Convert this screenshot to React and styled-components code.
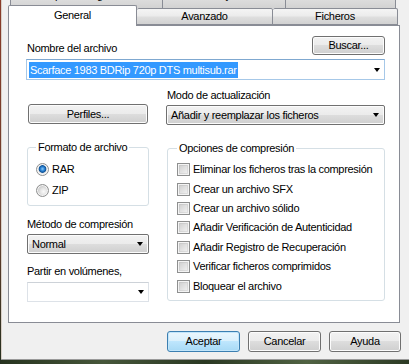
import React from 'react'
import styled, { createGlobalStyle } from 'styled-components'

const GlobalStyle = createGlobalStyle`
  html, body {
    margin: 0;
    padding: 0;
    background: #f0f0f0;
  }
  body {
    font-family: 'Liberation Sans', Arial, sans-serif;
    font-size: 11px;
    letter-spacing: -0.3px;
    color: #000;
  }
`

const topTabs = [
  { label: 'Copia de seguridad', width: 153 },
  { label: 'Fecha y hora', width: 124 },
  { label: 'Comentario', width: 111 },
]

const bottomTabs = [
  { label: 'General', width: 129, active: true },
  { label: 'Avanzado', width: 136 },
  { label: 'Ficheros', width: 125 },
]

const options = [
  'Eliminar los ficheros tras la compresión',
  'Crear un archivo SFX',
  'Crear un archivo sólido',
  'Añadir Verificación de Autenticidad',
  'Añadir Registro de Recuperación',
  'Verificar ficheros comprimidos',
  'Bloquear el archivo',
]

const App = () => {
  return (
    <Window>
      <GlobalStyle />
      <TabRowBack>
        {topTabs.map((t) => (
          <Tab key={t.label} style={{ width: t.width }}>
            {t.label}
          </Tab>
        ))}
      </TabRowBack>
      <TabRowFront>
        {bottomTabs.map((t) => (
          <Tab key={t.label} $active={t.active} style={{ width: t.width }}>
            {t.label}
          </Tab>
        ))}
      </TabRowFront>

      <Panel>
        <TopRow>
          <Label>Nombre del archivo</Label>
          <Button $w={73} $h={19}>Buscar...</Button>
        </TopRow>
        <EditCombo $focused $wide>
          <Selected>Scarface 1983 BDRip 720p DTS multisub.rar</Selected>
          <Arrow />
        </EditCombo>

        <Columns>
          <LeftColumn>
            <Button $w={120} $h={20} $ml={1} $mt={15}>Perfiles...</Button>

            <GroupBox $mt={17}>
              <Legend>Formato de archivo</Legend>
              <OptionRow $h={21}>
                <Radio $checked />
                <span>RAR</span>
              </OptionRow>
              <OptionRow $h={21}>
                <Radio />
                <span>ZIP</span>
              </OptionRow>
            </GroupBox>

            <Label $mt={12}>Método de compresión</Label>
            <ListCombo $mt={3}>
              <span>Normal</span>
              <Arrow />
            </ListCombo>

            <Label $mt={11}>Partir en volúmenes,</Label>
            <EditCombo $mt={4}>
              <span />
              <Arrow />
            </EditCombo>
          </LeftColumn>

          <RightColumn>
            <Label>Modo de actualización</Label>
            <ListCombo $mt={3} $ml={-1}>
              <span>Añadir y reemplazar los ficheros</span>
              <Arrow />
            </ListCombo>

            <GroupBox $mt={17} $pl={9}>
              <Legend>Opciones de compresión</Legend>
              {options.map((o) => (
                <OptionRow key={o} $h={19.4}>
                  <Check />
                  <span>{o}</span>
                </OptionRow>
              ))}
            </GroupBox>
          </RightColumn>
        </Columns>
      </Panel>

      <ButtonRow>
        <Button $w={73} $h={21} $default>Aceptar</Button>
        <Button $w={73} $h={21}>Cancelar</Button>
        <Button $w={72} $h={21}>Ayuda</Button>
      </ButtonRow>

      <Filler />
      <FrameBottom />
    </Window>
  )
}

export default App

const Window = styled.div`
  width: 409px;
  height: 364px;
  box-sizing: border-box;
  overflow: hidden;
  display: flex;
  flex-direction: column;
  background: #f0f0f0;
  border-left: 1px solid;
  border-image: linear-gradient(#8a3c2a, #6a3e2c 60%, #243020) 1;
  box-shadow: inset 1px 0 0 #d8cfc6;
`

const TabRowBack = styled.div`
  display: flex;
  align-items: flex-end;
  height: 8px;
  padding-left: 9px;
  overflow: hidden;
  flex-shrink: 0;
`

const TabRowFront = styled.div`
  display: flex;
  align-items: flex-end;
  height: 17px;
  padding-left: 7px;
  flex-shrink: 0;
`

const Tab = styled.div`
  box-sizing: border-box;
  flex-shrink: 0;
  height: ${(p) => (p.$active ? '21px' : '17px')};
  margin-bottom: ${(p) => (p.$active ? '-1px' : '0')};
  border: 1px solid #898c95;
  border-bottom: ${(p) => (p.$active ? 'none' : '1px solid #898c95')};
  border-left-width: ${(p) => (p.$active ? '1px' : '0')};
  border-radius: 2px 2px 0 0;
  background: ${(p) =>
    p.$active ? '#fff' : 'linear-gradient(#f4f4f4, #ececec 45%, #dedede 55%, #d2d2d2)'};
  position: relative;
  z-index: ${(p) => (p.$active ? 2 : 0)};
  display: flex;
  justify-content: center;
  align-items: ${(p) => (p.$active ? 'flex-start' : 'center')};
  padding-top: ${(p) => (p.$active ? '3px' : '0')};
  line-height: 13px;
  white-space: nowrap;

  ${TabRowBack} & {
    height: 22px;
    border-bottom: none;
    border-left-width: 1px;
    margin-right: -1px;
    align-items: flex-start;
    padding-top: 2px;
  }
`

const Panel = styled.div`
  position: relative;
  z-index: 1;
  box-sizing: border-box;
  width: 392px;
  height: 298px;
  margin-left: 7px;
  flex-shrink: 0;
  background: #fff;
  border: 1px solid #898c95;
  padding: 10px 14px 0 18px;
  display: flex;
  flex-direction: column;
`

const TopRow = styled.div`
  display: flex;
  justify-content: space-between;
  align-items: flex-end;
  height: 19px;
`

const Label = styled.div`
  line-height: 13px;
  margin-top: ${(p) => p.$mt || 0}px;
  white-space: nowrap;
`

const Button = styled.div`
  box-sizing: border-box;
  flex-shrink: 0;
  width: ${(p) => p.$w}px;
  height: ${(p) => p.$h}px;
  margin-top: ${(p) => p.$mt || 0}px;
  margin-left: ${(p) => p.$ml || 0}px;
  border: 1px solid ${(p) => (p.$default ? '#3c7fb1' : '#707070')};
  border-radius: 3px;
  background: ${(p) =>
    p.$default
      ? 'linear-gradient(#eaf6fd, #d9f0fc 50%, #bee6fd 50%, #a7d9f5)'
      : 'linear-gradient(#f2f2f2, #ebebeb 50%, #dddddd 50%, #cfcfcf)'};
  box-shadow: inset 0 0 0 1px ${(p) => (p.$default ? '#c2e6fb' : '#fcfcfc')};
  display: flex;
  align-items: center;
  justify-content: center;
  line-height: 13px;
`

const Arrow = styled.span`
  width: 0;
  height: 0;
  border-left: 3.5px solid transparent;
  border-right: 3.5px solid transparent;
  border-top: 4px solid #000;
  flex-shrink: 0;
`

const EditCombo = styled.div`
  box-sizing: border-box;
  width: ${(p) => (p.$wide ? '359px' : '122px')};
  height: ${(p) => (p.$wide ? '21px' : '20px')};
  margin-top: ${(p) => (p.$wide ? 4 : p.$mt || 0)}px;
  margin-left: ${(p) => (p.$wide ? -1 : 0)}px;
  border: 1px solid ${(p) => (p.$focused ? '#a6c8e8' : '#dde2e8')};
  border-top-color: ${(p) => (p.$focused ? '#7fa8d0' : '#cdd2d8')};
  background: #fff;
  display: flex;
  align-items: center;
  justify-content: space-between;
  padding: 0 4px 0 2px;
`

const Selected = styled.span`
  background: #3399ff;
  color: #fff;
  line-height: 16px;
  padding: 0 1px;
`

const ListCombo = styled.div`
  box-sizing: border-box;
  height: 20px;
  margin-top: ${(p) => p.$mt || 0}px;
  margin-left: ${(p) => p.$ml || 0}px;
  border: 1px solid #707070;
  border-radius: 2px;
  background: linear-gradient(#f2f2f2, #ebebeb 50%, #dddddd 50%, #cfcfcf);
  box-shadow: inset 0 0 0 1px #fcfcfc;
  display: flex;
  align-items: center;
  justify-content: space-between;
  padding: 0 5px 0 4px;
  white-space: nowrap;
`

const Columns = styled.div`
  display: grid;
  grid-template-columns: 122px 218px;
  column-gap: 18px;
  margin-top: 9px;
`

const LeftColumn = styled.div`
  display: flex;
  flex-direction: column;
`

const RightColumn = styled.div`
  display: flex;
  flex-direction: column;
`

const GroupBox = styled.fieldset`
  margin: ${(p) => p.$mt || 0}px 0 0 0;
  padding: 5px 8px 4px ${(p) => p.$pl || 8}px;
  min-inline-size: 0;
  border: 1px solid #d5dfe5;
  border-radius: 3px;
`

const Legend = styled.legend`
  padding: 0 2px;
  line-height: 13px;
  white-space: nowrap;
`

const OptionRow = styled.div`
  display: flex;
  align-items: center;
  gap: 3px;
  height: ${(p) => p.$h}px;
  line-height: 13px;
  white-space: nowrap;
`

const Radio = styled.span`
  box-sizing: border-box;
  width: 13px;
  height: 13px;
  flex-shrink: 0;
  border-radius: 50%;
  border: 1px solid #8e8f8f;
  background: ${(p) =>
    p.$checked
      ? 'radial-gradient(circle at 50% 45%, #8ccbf7 0, #2d83d4 2px, #0d5196 3.5px, #e2e2e2 4.2px, #f8f8f8 5.5px)'
      : 'radial-gradient(circle at 60% 60%, #fafafa 0, #e6e6e6 3px, #cfcfcf 5.5px)'};
  box-shadow: inset 0 0 0 1px #f4f4f4;
`

const Check = styled.span`
  box-sizing: border-box;
  width: 13px;
  height: 13px;
  flex-shrink: 0;
  border: 1px solid #8e8f8f;
  background: linear-gradient(135deg, #cbcbcb, #f7f7f7);
  box-shadow: inset 0 0 0 1px #f4f4f4, inset 0 0 0 2px #ababab44;
`

const ButtonRow = styled.div`
  display: flex;
  justify-content: flex-end;
  gap: 8px;
  margin-top: 8px;
  padding-right: 8px;
  flex-shrink: 0;
`

const Filler = styled.div`
  flex: 1;
`

const FrameBottom = styled.div`
  height: 4px;
  flex-shrink: 0;
  border-top: 1px solid #9a9a9a;
  background: linear-gradient(90deg, #26331e, #46563a 25%, #2a3822 50%, #506242 75%, #2c3a24);
`
